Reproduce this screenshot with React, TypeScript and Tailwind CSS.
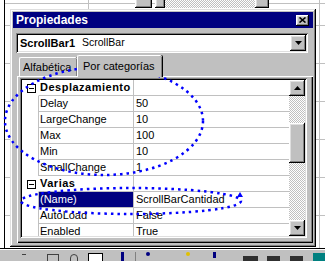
import React, { ReactElement } from 'react'

const raised =
  'bg-[#c0c0c0] shadow-[inset_-1px_-1px_#000,inset_1px_1px_#fff,inset_-2px_-2px_#808080,inset_2px_2px_#dfdfdf]'
const sunken =
  'shadow-[inset_1px_1px_#808080,inset_-1px_-1px_#fff,inset_2px_2px_#000,inset_-2px_-2px_#dfdfdf]'
const checker =
  'bg-[repeating-conic-gradient(#c0c0c0_0_25%,#ffffff_0_50%)] bg-size-[2px_2px]'

interface PropRow {
  name: string
  value?: string
  category?: boolean
  selected?: boolean
}

const rows: PropRow[] = [
  { name: 'Desplazamiento', category: true },
  { name: 'Delay', value: '50' },
  { name: 'LargeChange', value: '10' },
  { name: 'Max', value: '100' },
  { name: 'Min', value: '10' },
  { name: 'SmallChange', value: '1' },
  { name: 'Varias', category: true },
  { name: '(Name)', value: 'ScrollBarCantidad', selected: true },
  { name: 'AutoLoad', value: 'False' },
  { name: 'Enabled', value: 'True' },
]

function Arrow({ down }: { down?: boolean }): ReactElement {
  return (
    <svg width="7" height="4" viewBox="0 0 7 4" className="block">
      <polygon points={down ? '0,0 7,0 3.5,4' : '0,4 7,4 3.5,0'} fill="#000" />
    </svg>
  )
}

function MinusBox(): ReactElement {
  return (
    <div className="ml-[5px] flex h-[9px] w-[9px] items-center justify-center border border-black bg-white">
      <div className="h-[1px] w-[5px] bg-black" />
    </div>
  )
}

function PropertyRow({ row }: { row: PropRow }): ReactElement {
  return (
    <div className="flex h-[16px] shrink-0">
      <div className="flex w-[16px] items-center">{row.category && <MinusBox />}</div>
      <div
        className={`h-[16px] w-[96px] border-b border-l border-r border-[#c0c0c0] pl-[1px] leading-[15px] whitespace-nowrap ${
          row.category ? 'font-bold tracking-[0.5px] border-l-white' : ''
        } ${row.selected ? 'bg-[#000080] text-white' : ''}`}
      >
        {row.name}
      </div>
      <div className="h-[16px] w-[155px] border-b border-[#c0c0c0] pl-[2px] leading-[15px] whitespace-nowrap">
        {row.value}
      </div>
    </div>
  )
}

function ScrollBar(): ReactElement {
  return (
    <div className="flex w-[16px] flex-col">
      <div className={`${raised} flex h-[16px] items-center justify-center`}>
        <Arrow />
      </div>
      <div className={`${checker} flex-1`}>
        <div className={`${raised} mt-[27px] h-[40px]`} />
      </div>
      <div className={`${raised} flex h-[16px] items-center justify-center`}>
        <Arrow down />
      </div>
    </div>
  )
}

function Dialog(): ReactElement {
  return (
    <div className="absolute left-[10px] top-[9px] h-[238px] w-[306px] bg-[#c0c0c0] p-[3px] shadow-[inset_-1px_-1px_#000,inset_1px_1px_#dfdfdf,inset_-2px_-2px_#808080,inset_2px_2px_#fff]">
      <div className="flex h-[16px] items-center justify-between bg-[#000080] pl-[3px] pr-[4px]">
        <span className="text-[12px] font-bold leading-[16px] text-white">Propiedades</span>
        <div className={`${raised} flex h-[11px] w-[13px] items-center justify-center`}>
          <svg width="7" height="6" viewBox="0 0 7 6" className="block">
            <path d="M0.5 0.5 L6.5 5.5 M6.5 0.5 L0.5 5.5" stroke="#000" strokeWidth="1.6" />
          </svg>
        </div>
      </div>

      <div className={`${sunken} ml-[3px] mt-[5px] flex h-[20px] w-[292px] items-center bg-white pl-[4px] pr-[2px]`}>
        <span className="text-[11px] font-bold">ScrollBar1</span>
        <span className="ml-[7px] text-[10.5px]">ScrollBar</span>
        <div className={`${raised} ml-auto flex h-[16px] w-[16px] items-center justify-center`}>
          <Arrow down />
        </div>
      </div>

      <div className="ml-[4px] mt-[2px] flex h-[21px] items-end">
        <div className="ml-[2px] h-[19px] w-[58px] rounded-t-[2px] border-l border-t border-white pl-[3px] leading-[18px] shadow-[inset_-1px_0_#808080,1px_0_#000]">
          Alfabética
        </div>
        <div className="relative z-10 -mb-[1px] h-[22px] w-[85px] rounded-t-[2px] border-l border-t border-white bg-[#c0c0c0] pl-[5px] leading-[20px] shadow-[inset_-1px_0_#808080,1px_0_#000]">
          Por categorías
        </div>
      </div>

      <div className="ml-[4px] h-[167px] w-[296px] border-l border-t border-white pl-[2px] pt-[1px] shadow-[inset_-1px_-1px_#000,inset_-2px_-2px_#808080]">
        <div className={`${sunken} flex h-[160px] w-[287px] bg-white p-[2px]`}>
          <div className="flex w-[267px] flex-col overflow-hidden">
            {rows.map((r: PropRow) => (
              <PropertyRow key={`row${r.name}`} row={r} />
            ))}
          </div>
          <ScrollBar />
        </div>
      </div>
    </div>
  )
}

function Sheet(): ReactElement {
  return (
    <>
      {/* excel grid behind the window */}
      <div className="absolute left-[4px] top-0 h-[249px] w-[1px] bg-black" />
      <div className="absolute left-[88px] top-0 h-[9px] w-[1px] bg-[#c0c0c0]" />
      <div className="absolute left-[319px] top-0 h-[249px] w-[1px] bg-[#c0c0c0]" />
      {[3, 25, 63, 101, 139, 177, 215].map((y: number) => (
        <div
          key={`hl${y}`}
          className="absolute left-[5px] right-0 h-[1px] bg-[#c0c0c0]"
          style={{ top: y }}
        />
      ))}
      {/* scrollbar control on the sheet */}
      <div className="absolute left-[135px] top-[-9px] flex h-[17px] w-[134px]">
        <div className={`${raised} w-[17px]`} />
        <div className={`${raised} ml-[3px] w-[10px]`} />
        <div className={`${checker} flex-1`} />
        <div className={`${raised} w-[14px]`} />
      </div>
      {/* toolbar below */}
      <div className="absolute bottom-0 left-0 right-0 h-[13px] border-t border-black bg-[#c0c0c0] shadow-[inset_0_1px_#fff]">
        <div className="absolute left-[22px] top-[5px] h-[1px] w-[4px] bg-[#404040]" />
        <div className="absolute left-[47px] top-[5px] h-[8px] w-[12px] border border-[#404040]" />
        <div className="absolute left-[70px] top-[5px] h-[8px] w-[8px] rounded-t-full border border-[#404040]" />
        <div className="absolute left-[88px] top-[4px] h-[9px] w-[15px] border border-black bg-white" />
        <div className="absolute left-[121px] top-[3px] h-[9px] w-[3px] bg-[#000080]" />
        <div className="absolute left-[135px] top-[3px] h-[10px] w-[1px] bg-[#808080]" />
        <div className="absolute left-[146px] top-[3px] h-[4px] w-[4px] rounded-full bg-[#000080]" />
        <div className="absolute left-[186px] top-[3px] h-[4px] w-[4px] rounded-full bg-[#e0c000]" />
        <div className="absolute left-[213px] top-[3px] h-[6px] w-[3px] bg-[#000080]" />
        <div className="absolute left-[243px] top-[7px] h-[6px] w-[15px] bg-[#303030]" />
        <div className="absolute left-[267px] top-[7px] h-[6px] w-[13px] bg-[#303030]" />
        <div className="absolute left-[290px] top-[7px] h-[6px] w-[13px] bg-[#303030]" />
        <div className="absolute left-[313px] top-[4px] h-[9px] w-[12px] bg-[#008080]" />
      </div>
    </>
  )
}

export default function App(): ReactElement {
  return (
    <div className="relative h-[261px] w-[325px] overflow-hidden bg-white font-['Liberation_Sans',Arial,sans-serif] text-[11px] text-black">
      <Sheet />
      <Dialog />
      <svg className="pointer-events-none absolute left-0 top-0" width="325" height="261">
        <ellipse
          cx="104"
          cy="121"
          rx="99"
          ry="54"
          fill="none"
          stroke="#0000ff"
          strokeWidth="2.5"
          strokeDasharray="2.5 4"
        />
        <ellipse
          cx="131"
          cy="201"
          rx="110"
          ry="13"
          fill="none"
          stroke="#0000ff"
          strokeWidth="2.5"
          strokeDasharray="2.5 4"
        />
        <polygon points="237,197 243,197 240,192" fill="#0000ff" />
      </svg>
    </div>
  )
}
